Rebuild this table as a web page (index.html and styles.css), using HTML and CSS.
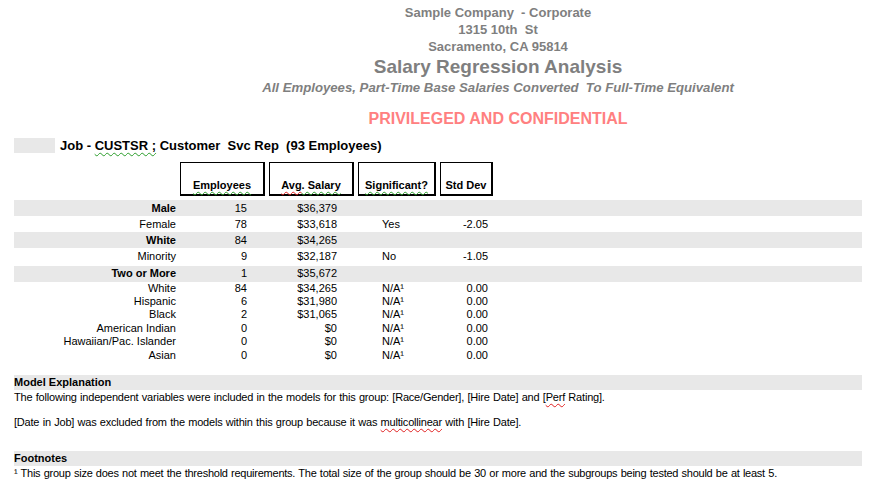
FILE: index.html
```html
<!DOCTYPE html>
<html>
<head>
<meta charset="utf-8">
<link rel="stylesheet" href="styles.css">
</head>
<body>
<div class="page">
  <header class="head">
    <div class="co">Sample Company&nbsp; - Corporate</div>
    <div class="co">1315 10th&nbsp; St</div>
    <div class="co addr">Sacramento, CA 95814</div>
    <div class="title">Salary Regression Analysis</div>
    <div class="sub">All Employees, Part-Time Base Salaries Converted&nbsp; To Full-Time Equivalent</div>
    <div class="priv">PRIVILEGED AND CONFIDENTIAL</div>
  </header>

  <div class="job">
    <span class="jobmark"></span>
    <span class="jobtext">Job - <span class="sq-g">CUSTSR ;</span> Customer&nbsp; Svc Rep&nbsp; (93 Employees)</span>
  </div>

  <div class="colheads">
    <div class="box b1"><span class="sq-g">Employees</span></div>
    <div class="box b2"><span class="sq-r">Avg</span><span class="sq-g">. Salary</span></div>
    <div class="box b3"><span class="sq-g">Significant?</span></div>
    <div class="box b4">Std Dev</div>
  </div>

  <div class="tbl">
    <div class="row big shade bold"><span class="c lab">Male</span><span class="c n">15</span><span class="c s">$36,379</span><span class="c sig"></span><span class="c sd"></span></div>
    <div class="row big"><span class="c lab">Female</span><span class="c n">78</span><span class="c s">$33,618</span><span class="c sig">Yes</span><span class="c sd">-2.05</span></div>
    <div class="row big shade bold"><span class="c lab">White</span><span class="c n">84</span><span class="c s">$34,265</span><span class="c sig"></span><span class="c sd"></span></div>
    <div class="row big"><span class="c lab">Minority</span><span class="c n">9</span><span class="c s">$32,187</span><span class="c sig">No</span><span class="c sd">-1.05</span></div>
    <div class="row two shade bold"><span class="c lab">Two or More</span><span class="c n">1</span><span class="c s">$35,672</span><span class="c sig"></span><span class="c sd"></span></div>
    <div class="row sm"><span class="c lab">White</span><span class="c n">84</span><span class="c s">$34,265</span><span class="c sig">N/A¹</span><span class="c sd">0.00</span></div>
    <div class="row sm"><span class="c lab">Hispanic</span><span class="c n">6</span><span class="c s">$31,980</span><span class="c sig">N/A¹</span><span class="c sd">0.00</span></div>
    <div class="row sm"><span class="c lab">Black</span><span class="c n">2</span><span class="c s">$31,065</span><span class="c sig">N/A¹</span><span class="c sd">0.00</span></div>
    <div class="row sm"><span class="c lab">American Indian</span><span class="c n">0</span><span class="c s">$0</span><span class="c sig">N/A¹</span><span class="c sd">0.00</span></div>
    <div class="row sm"><span class="c lab">Hawaiian/Pac. Islander</span><span class="c n">0</span><span class="c s">$0</span><span class="c sig">N/A¹</span><span class="c sd">0.00</span></div>
    <div class="row sm"><span class="c lab">Asian</span><span class="c n">0</span><span class="c s">$0</span><span class="c sig">N/A¹</span><span class="c sd">0.00</span></div>
  </div>

  <section class="note model">
    <div class="band">Model Explanation</div>
    <p class="txt">The following independent variables were included in the models for this group: [Race/Gender], [Hire Date] and [<span class="sq-r">Perf</span> Rating].</p>
    <p class="txt gap">[Date in Job] was excluded from the models within this group because it was <span class="sq-r">multicollinear</span> with [Hire Date].</p>
  </section>

  <section class="note foot">
    <div class="band">Footnotes</div>
    <p class="txt fn">¹ This group size does not meet the threshold requirements. The total size of the group should be 30 or more and the subgroups being tested should be at least 5.</p>
  </section>
</div>
</body>
</html>
```

FILE: styles.css
```css
* { box-sizing: border-box; }
html, body { margin: 0; padding: 0; background: #fff; }
body {
  font-family: "Liberation Sans", Arial, sans-serif;
  color: #000;
  width: 879px;
  height: 487px;
  overflow: hidden;
}
.page { padding-top: 4px; }

.head {
  margin-left: 117px;
  text-align: center;
  color: #7f7f7f;
  font-weight: bold;
}
.co { font-size: 13px; line-height: 17px; }
.title { font-size: 19px; line-height: 22px; margin-top: 1px; }
.sub { font-size: 13.2px; font-style: italic; line-height: 18px; margin-top: 1px; }
.priv {
  color: #ff8080;
  font-size: 16px;
  line-height: 18px;
  margin-top: 13px;
}

.job {
  display: flex;
  align-items: center;
  margin-top: 10px;
  padding-left: 14px;
  height: 15px;
}
.jobmark { width: 41px; height: 15px; background: #e8e8e8; }
.jobtext { margin-left: 5px; font-size: 13px; font-weight: bold; }

.sq-g, .sq-r {
  text-decoration-line: underline;
  text-decoration-style: wavy;
  text-decoration-thickness: 1px;
  text-underline-offset: 2px;
}
.sq-g { text-decoration-color: #2a9d2a; }
.sq-r { text-decoration-color: #e02020; }

.colheads {
  display: flex;
  gap: 4px;
  margin-top: 9px;
  padding-left: 180px;
  height: 34px;
}
.box {
  height: 34px;
  border: 1px solid #000;
  border-right-width: 2px;
  border-bottom-width: 2px;
  display: flex;
  align-items: flex-end;
  justify-content: center;
  padding-bottom: 2px;
  font-size: 11px;
  font-weight: bold;
  line-height: 13px;
}
.b1 { width: 85px; }
.b2 { width: 85px; }
.b3 { width: 78px; }
.b4 { width: 53px; }

.tbl { margin-top: 4px; font-size: 11px; }
.row {
  display: grid;
  grid-template-columns: 162px 71px 90px 105px 46px;
  margin-left: 14px;
  width: 848px;
  align-items: center;
}
.row.big { height: 16px; }
.row.two { height: 15.5px; margin-top: 2px; }
.row.sm { height: 13.4px; }
.shade { background: #e8e8e8; }
.bold .lab { font-weight: bold; }
.c { line-height: 13px; white-space: nowrap; }
.lab, .n, .s, .sd { text-align: right; }
.sig { padding-left: 45px; }

.note { margin-left: 14px; width: 848px; font-size: 11px; }
.model { margin-top: 13px; }
.foot { margin-top: 22px; }
.band {
  background: #e8e8e8;
  font-weight: bold;
  height: 15px;
  line-height: 15px;
}
.txt {
  margin: 0;
  line-height: 13px;
  margin-top: 1px;
  letter-spacing: -0.2px;
  word-spacing: 0.5px;
  white-space: nowrap;
}
.txt.fn { letter-spacing: -0.24px; }
.txt.gap { margin-top: 12px; }
```
